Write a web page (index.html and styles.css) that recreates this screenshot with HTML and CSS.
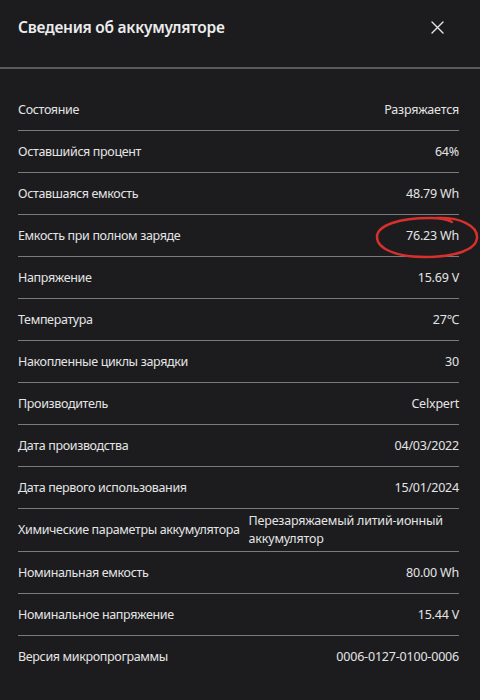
FILE: index.html
```html
<!DOCTYPE html>
<html lang="ru">
<head>
<meta charset="utf-8">
<title>Сведения об аккумуляторе</title>
<link rel="stylesheet" href="styles.css">
</head>
<body>
<div class="dialog">
  <div class="header">
    <div class="title">Сведения об аккумуляторе</div>
    <button class="close" aria-label="Закрыть">
      <svg width="13" height="13" viewBox="0 0 13 13"><path d="M1 1 L12 12 M12 1 L1 12" stroke="#e6e6e6" stroke-width="1.4" fill="none" stroke-linecap="round"/></svg>
    </button>
  </div>
  <div class="list">
    <div class="row"><span class="label">Состояние</span><span class="value">Разряжается</span></div>
    <div class="row"><span class="label">Оставшийся процент</span><span class="value">64%</span></div>
    <div class="row"><span class="label">Оставшаяся емкость</span><span class="value">48.79 Wh</span></div>
    <div class="row marked"><span class="label">Емкость при полном заряде</span><span class="value">76.23 Wh</span>
      <svg class="circle" width="110" height="52" viewBox="0 0 110 52"><path d="M67 8 C90 7, 108 16, 107 28 C106 40, 85 47, 55 47 C27 47, 7 39, 7 27 C7 15, 30 8, 60 8 C70 8, 77 9, 82 12" stroke="#d8302c" stroke-width="2.4" fill="none" stroke-linecap="round"/></svg>
    </div>
    <div class="row"><span class="label">Напряжение</span><span class="value">15.69 V</span></div>
    <div class="row"><span class="label">Температура</span><span class="value">27℃</span></div>
    <div class="row"><span class="label">Накопленные циклы зарядки</span><span class="value">30</span></div>
    <div class="row"><span class="label">Производитель</span><span class="value">Celxpert</span></div>
    <div class="row"><span class="label">Дата производства</span><span class="value">04/03/2022</span></div>
    <div class="row"><span class="label">Дата первого использования</span><span class="value">15/01/2024</span></div>
    <div class="row tall"><span class="label">Химические параметры аккумулятора</span><span class="value wrap">Перезаряжаемый литий&#8209;ионный аккумулятор</span></div>
    <div class="row"><span class="label">Номинальная емкость</span><span class="value">80.00 Wh</span></div>
    <div class="row"><span class="label">Номинальное напряжение</span><span class="value">15.44 V</span></div>
    <div class="row last"><span class="label">Версия микропрограммы</span><span class="value">0006-0127-0100-0006</span></div>
  </div>
</div>
</body>
</html>
```

FILE: styles.css
```css
html, body {
  margin: 0;
  padding: 0;
  background: #1c1c1f;
}
body {
  font-family: "Noto Sans", "Open Sans", sans-serif;
  color: #e4e4e4;
  width: 480px;
  height: 700px;
  overflow: hidden;
}
.dialog {
  display: flex;
  flex-direction: column;
}
.header {
  box-sizing: border-box;
  height: 69px;
  border-bottom: 2px solid #5a5a5a;
  display: flex;
  justify-content: space-between;
  align-items: flex-start;
  padding: 14px 36px 0 18px;
}
.title {
  font-size: 15.5px;
  font-weight: 600;
  letter-spacing: -0.25px;
  line-height: 26px;
  color: #ececec;
}
.close {
  background: none;
  border: 0;
  padding: 0;
  margin-top: 7px;
  width: 13px;
  height: 13px;
  display: flex;
}
.list {
  padding: 20px 21px 0 18px;
  display: flex;
  flex-direction: column;
}
.row {
  min-height: 41px;
  border-bottom: 1px solid #7a7a7a;
  display: flex;
  justify-content: space-between;
  align-items: center;
  font-size: 12.5px;
  letter-spacing: -0.2px;
  line-height: 18px;
  gap: 9px;
}
.row.last {
  border-bottom: 0;
}
.row.tall {
  padding: 3px 0;
  min-height: 36px;
}
.label {
  flex-shrink: 0;
  letter-spacing: -0.35px;
  color: #e4e4e4;
}
.value {
  text-align: right;
  color: #e4e4e4;
}
.value.wrap {
  text-align: left;
  flex: 1;
}
.marked {
  position: relative;
}
.circle {
  position: absolute;
  left: 352px;
  top: -5px;
}
```
